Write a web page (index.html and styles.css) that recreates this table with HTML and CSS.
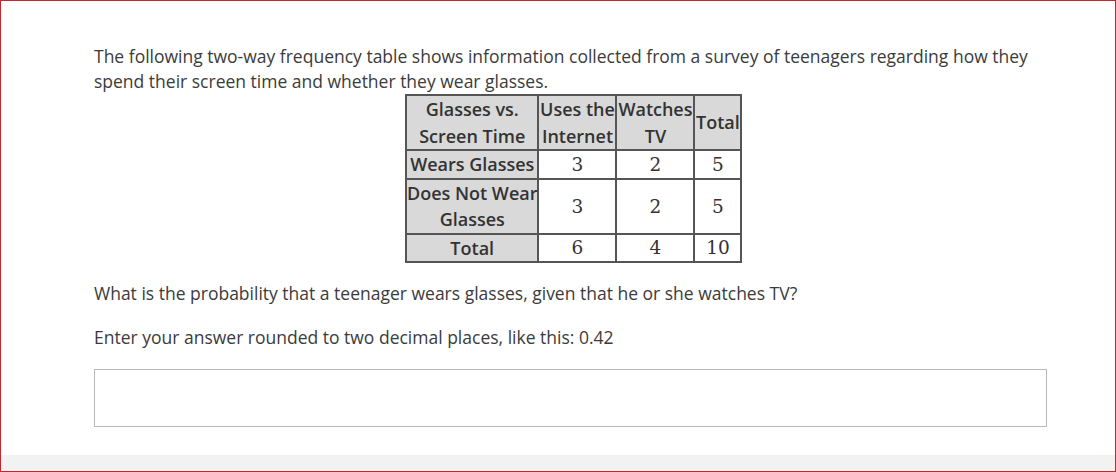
FILE: index.html
```html
<!DOCTYPE html>
<html>
<head>
<meta charset="utf-8">
<link rel="stylesheet" href="styles.css">
</head>
<body>
<div class="frame">
  <div class="content">
    <p class="intro">The following two-way frequency table shows information collected from a survey of teenagers regarding how they spend their screen time and whether they wear glasses.</p>
    <table class="freq">
      <tr>
        <th class="c1">Glasses vs.<br>Screen Time</th>
        <th class="c2">Uses the<br>Internet</th>
        <th class="c3">Watches<br>TV</th>
        <th class="c4">Total</th>
      </tr>
      <tr>
        <th>Wears Glasses</th>
        <td>3</td><td>2</td><td>5</td>
      </tr>
      <tr>
        <th>Does Not Wear<br>Glasses</th>
        <td>3</td><td>2</td><td>5</td>
      </tr>
      <tr>
        <th>Total</th>
        <td>6</td><td>4</td><td>10</td>
      </tr>
    </table>
    <p class="q1">What is the probability that a teenager wears glasses, given that he or she watches TV?</p>
    <p class="q2">Enter your answer rounded to two decimal places, like this: 0.42</p>
    <div class="answer"></div>
  </div>
  <div class="footer"></div>
</div>
</body>
</html>
```
FILE: styles.css
```css
html, body {
  margin: 0;
  padding: 0;
  background: #fff;
}
.frame {
  width: 1116px;
  height: 472px;
  box-sizing: border-box;
  border: 1px solid #c4262e;
  display: flex;
  flex-direction: column;
  font-family: "Open Sans", sans-serif;
  color: #3b3b3b;
}
.content {
  flex: 1;
  padding: 43px 68px 0 93px;
}
.intro {
  margin: 0;
  font-size: 17.5px;
  line-height: 25px;
}
.freq {
  border-collapse: collapse;
  margin: 0 0 0 311px;
  color: #333;
}
.freq th, .freq td {
  border: 2px solid #555;
  padding: 0;
  text-align: center;
}
.freq th {
  background: #d9d9d9;
  font-weight: 600;
  font-size: 18px;
  line-height: 26.5px;
  white-space: nowrap;
}
.freq td {
  font-family: "DejaVu Serif", "Liberation Serif", serif;
  font-size: 18.5px;
  background: #fff;
}
.c1 { width: 130px; }
.c2 { width: 76px; }
.c3 { width: 76px; }
.c4 { width: 45px; }
.q1 {
  margin: 18px 0 0;
  font-size: 17.5px;
  line-height: 25px;
}
.q2 {
  margin: 19px 0 0;
  font-size: 17.5px;
  line-height: 25px;
}
.answer {
  margin-top: 19px;
  width: 951px;
  height: 56px;
  border: 1px solid #b8b8b8;
}
.footer {
  height: 16px;
  background: #f2f2f2;
}
```
